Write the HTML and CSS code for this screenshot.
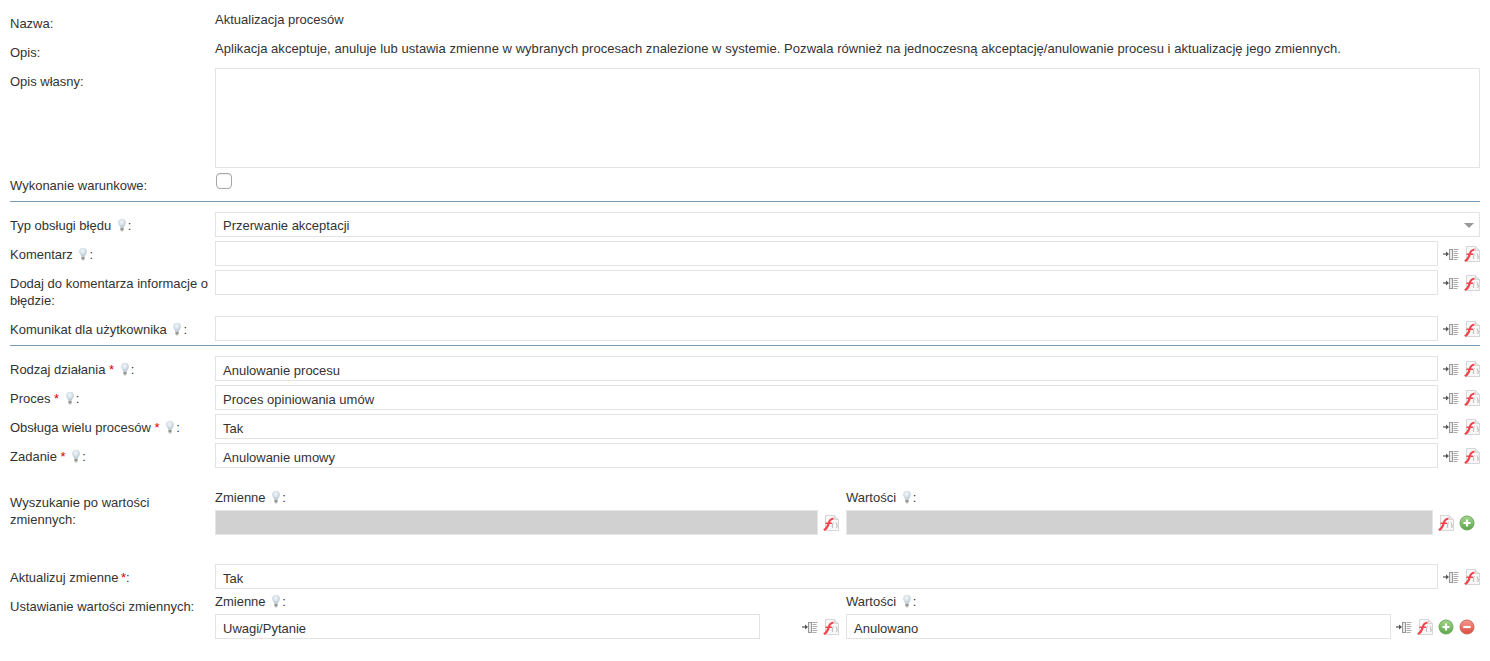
FILE: index.html
```html
<!DOCTYPE html>
<html lang="pl">
<head>
<meta charset="utf-8">
<title>Aktualizacja procesów</title>
<link rel="stylesheet" href="styles.css">
</head>
<body>
<svg class="defs" width="0" height="0" aria-hidden="true">
  <defs>
    <radialGradient id="bulbGlass" cx="45%" cy="35%" r="60%">
      <stop offset="0" stop-color="#f4f7f9"/><stop offset="0.6" stop-color="#d4dfe6"/><stop offset="1" stop-color="#b4c2cb"/>
    </radialGradient>
    <linearGradient id="greenDisc" x1="0" y1="0" x2="0" y2="1">
      <stop offset="0" stop-color="#a5d68c"/><stop offset="1" stop-color="#5aa548"/>
    </linearGradient>
    <linearGradient id="redDisc" x1="0" y1="0" x2="0" y2="1">
      <stop offset="0" stop-color="#f49a8e"/><stop offset="1" stop-color="#dc4a3a"/>
    </linearGradient>
    <symbol id="i-bulb" viewBox="0 0 10 14">
      <path d="M5 .8C2.700.8 1.200 2.500 1.200 4.600c0 1.600.8 2.500 1.400 3.500.4.600.7 1.100.7 1.700h3.400c0-.6.300-1.100.7-1.700.6-1 1.400-1.900 1.400-3.500C8.800 2.500 7.300.8 5 .8z" fill="url(#bulbGlass)"/>
      <rect x="3.400" y="10" width="3.200" height="2.600" rx=".5" fill="#94948e"/>
      <rect x="4.200" y="12.500" width="1.600" height="1" fill="#b0b0aa"/>
    </symbol>
    <symbol id="i-insert" viewBox="0 0 16 16">
      <path d="M0 8h4.500" stroke="#555" stroke-width="1.200" fill="none"/>
      <path d="M3 5.500 6 8 3 10.500z" fill="#555"/>
      <rect x="6.500" y="3.500" width="3" height="10" fill="#e8e8e8" stroke="#999" stroke-width="1"/>
      <path d="M10.500 3.500h5M10.500 5.500h4M10.500 7.500h5M10.500 9.500h4M10.500 11.500h5M10.500 13.500h4" stroke="#aaa" stroke-width="1" fill="none"/>
    </symbol>
    <symbol id="i-script" viewBox="0 0 16 16">
      <path d="M2.500.5h9l4 4v11h-13z" fill="#f8f8f8" stroke="#d6d6d6" stroke-width="1"/>
      <path d="M11.500.5v4h4" fill="#e8e8e8" stroke="#d6d6d6" stroke-width="1"/>
      <path d="M10.600 7.500c-.9.300-.9 1-.9 1.900s0 1.500-.8 1.800c.8.300.8 1 .8 1.800M12.800 7.500c.9.300.9 1 .9 1.900s0 1.500.8 1.800c-.8.300-.8 1-.8 1.800" stroke="#a6a6a6" stroke-width=".9" fill="none"/>
      <path d="M.2 14.200C2.500 13 3.600 11 4.300 9H2.500V7.600H4.800C5.600 5 7 3 10.500 2.500V4.600C8.500 5 7.600 6 7 7.600H9V9H6.600C5.800 12 4 15 1.500 16z" fill="#f4424c"/>
    </symbol>
    <symbol id="i-plus" viewBox="0 0 16 16">
      <circle cx="8" cy="8" r="7" fill="url(#greenDisc)" stroke="#6aa95c" stroke-width="1"/>
      <path d="M8 4.500v7M4.500 8h7" stroke="#fff" stroke-width="2.200"/>
    </symbol>
    <symbol id="i-minus" viewBox="0 0 16 16">
      <circle cx="8" cy="8" r="7" fill="url(#redDisc)" stroke="#cf6558" stroke-width="1"/>
      <path d="M4.300 8h7.400" stroke="#fff" stroke-width="2.200"/>
    </symbol>
  </defs>
</svg>

<form class="form">
  <div class="row">
    <div class="label">Nazwa:</div>
    <div class="text">Aktualizacja procesów</div>
  </div>
  <div class="row">
    <div class="label">Opis:</div>
    <div class="text text-long">Aplikacja akceptuje, anuluje lub ustawia zmienne w wybranych procesach znalezione w systemie. Pozwala również na jednoczesną akceptację/anulowanie procesu i aktualizację jego zmiennych.</div>
  </div>
  <div class="row">
    <div class="label">Opis własny:</div>
    <textarea class="area"></textarea>
  </div>
  <div class="row">
    <div class="label">Wykonanie warunkowe:</div>
    <input class="check" type="checkbox">
  </div>
  <hr class="rule">

  <div class="row">
    <div class="label">Typ obsługi błędu <svg class="bulb"><use href="#i-bulb"/></svg>:</div>
    <div class="field select">Przerwanie akceptacji<span class="caret"></span></div>
  </div>
  <div class="row">
    <div class="label">Komentarz <svg class="bulb"><use href="#i-bulb"/></svg>:</div>
    <div class="control">
      <input class="field" type="text">
      <svg class="ico"><use href="#i-insert"/></svg><svg class="ico"><use href="#i-script"/></svg>
    </div>
  </div>
  <div class="row row-tall">
    <div class="label">Dodaj do komentarza informacje o błędzie:</div>
    <div class="control">
      <input class="field" type="text">
      <svg class="ico"><use href="#i-insert"/></svg><svg class="ico"><use href="#i-script"/></svg>
    </div>
  </div>
  <div class="row">
    <div class="label">Komunikat dla użytkownika <svg class="bulb"><use href="#i-bulb"/></svg>:</div>
    <div class="control">
      <input class="field" type="text">
      <svg class="ico"><use href="#i-insert"/></svg><svg class="ico"><use href="#i-script"/></svg>
    </div>
  </div>
  <hr class="rule">

  <div class="row">
    <div class="label">Rodzaj działania <span class="req">*</span> <svg class="bulb"><use href="#i-bulb"/></svg>:</div>
    <div class="control">
      <div class="field">Anulowanie procesu</div>
      <svg class="ico"><use href="#i-insert"/></svg><svg class="ico"><use href="#i-script"/></svg>
    </div>
  </div>
  <div class="row">
    <div class="label">Proces <span class="req">*</span> <svg class="bulb"><use href="#i-bulb"/></svg>:</div>
    <div class="control">
      <div class="field">Proces opiniowania umów</div>
      <svg class="ico"><use href="#i-insert"/></svg><svg class="ico"><use href="#i-script"/></svg>
    </div>
  </div>
  <div class="row">
    <div class="label">Obsługa wielu procesów <span class="req">*</span> <svg class="bulb"><use href="#i-bulb"/></svg>:</div>
    <div class="control">
      <div class="field">Tak</div>
      <svg class="ico"><use href="#i-insert"/></svg><svg class="ico"><use href="#i-script"/></svg>
    </div>
  </div>
  <div class="row">
    <div class="label">Zadanie <span class="req">*</span> <svg class="bulb"><use href="#i-bulb"/></svg>:</div>
    <div class="control">
      <div class="field">Anulowanie umowy</div>
      <svg class="ico"><use href="#i-insert"/></svg><svg class="ico"><use href="#i-script"/></svg>
    </div>
  </div>

  <div class="row row-search">
    <div class="label">Wyszukanie po wartości zmiennych:</div>
    <div class="pair">
      <div class="col">
        <div class="subhead">Zmienne <svg class="bulb"><use href="#i-bulb"/></svg>:</div>
        <div class="control">
          <div class="field disabled"></div>
          <svg class="ico"><use href="#i-script"/></svg>
        </div>
      </div>
      <div class="col">
        <div class="subhead">Wartości <svg class="bulb"><use href="#i-bulb"/></svg>:</div>
        <div class="control">
          <div class="field disabled"></div>
          <svg class="ico"><use href="#i-script"/></svg><svg class="ico"><use href="#i-plus"/></svg>
        </div>
      </div>
    </div>
  </div>

  <div class="row">
    <div class="label">Aktualizuj zmienne <span class="req req-tight">*</span>:</div>
    <div class="control">
      <div class="field">Tak</div>
      <svg class="ico"><use href="#i-insert"/></svg><svg class="ico"><use href="#i-script"/></svg>
    </div>
  </div>
  <div class="row">
    <div class="label">Ustawianie wartości zmiennych:</div>
    <div class="pair">
      <div class="col">
        <div class="subhead">Zmienne <svg class="bulb"><use href="#i-bulb"/></svg>:</div>
        <div class="control">
          <div class="field">Uwagi/Pytanie</div>
          <svg class="ico ico-first"><use href="#i-insert"/></svg><svg class="ico"><use href="#i-script"/></svg>
        </div>
      </div>
      <div class="col">
        <div class="subhead">Wartości <svg class="bulb"><use href="#i-bulb"/></svg>:</div>
        <div class="control">
          <div class="field">Anulowano</div>
          <svg class="ico"><use href="#i-insert"/></svg><svg class="ico"><use href="#i-script"/></svg><svg class="ico"><use href="#i-plus"/></svg><svg class="ico"><use href="#i-minus"/></svg>
        </div>
      </div>
    </div>
  </div>
</form>
</body>
</html>
```
FILE: styles.css
```css
* {
  box-sizing: border-box;
}

html,
body {
  margin: 0;
  background: #fff;
}

body {
  font-family: "Liberation Sans", Arial, sans-serif;
  font-size: 13px;
  line-height: 17px;
  color: #333;
  overflow: hidden;
}

.defs {
  display: block;
  height: 0;
}

.form {
  padding: 10px 10px 0;
}

.row {
  display: grid;
  grid-template-columns: 205px 1fr;
  align-items: start;
  min-height: 25px;
  margin-bottom: 4px;
}

.row-tall {
  min-height: 42px;
}

.row-search {
  margin-top: 21px;
  margin-bottom: 29px;
}

.label {
  padding: 5px 4px 3px 0;
}

.text {
  padding-top: 1px;
}

.text-long {
  letter-spacing: .043px;
}

.req {
  color: #d00;
}

.req-tight {
  margin-left: -1px;
}

.bulb {
  width: 10px;
  height: 14px;
  margin: 0 1px 0 2px;
  vertical-align: -2px;
}

.area {
  display: block;
  width: 100%;
  height: 100px;
  border: 1px solid #e3e3e3;
  background: #fff;
  resize: none;
}

.check {
  appearance: none;
  width: 16px;
  height: 16px;
  margin: 1px 0 0 1px;
  border: 1px solid #a6a6a6;
  border-radius: 4px;
  background: #fff;
  box-shadow: inset 0 1px 1px rgba(0, 0, 0, .08);
}

.rule {
  height: 1px;
  margin: 0 0 10px;
  border: 0;
  background: #7a9fb5;
}

.control {
  display: flex;
  align-items: center;
  gap: 5px;
}

.field {
  flex: 1;
  min-width: 0;
  height: 25px;
  padding: 5px 7px 3px;
  border: 1px solid #e3e3e3;
  background: #fff;
  font: inherit;
  color: inherit;
}

.select {
  position: relative;
  padding-top: 4px;
}

.caret {
  position: absolute;
  top: 10px;
  right: 5px;
  border-style: solid;
  border-width: 5px 5.5px 0;
  border-color: #999 transparent transparent;
}

.disabled {
  border-color: #e6e6e6;
  background: #d1d1d1;
}

.ico {
  flex: none;
  width: 16px;
  height: 16px;
}

.ico-first {
  margin-left: 37px;
}

.pair {
  display: grid;
  grid-template-columns: 624px 629px;
  column-gap: 7px;
}

.subhead {
  margin-bottom: 4px;
}
```
